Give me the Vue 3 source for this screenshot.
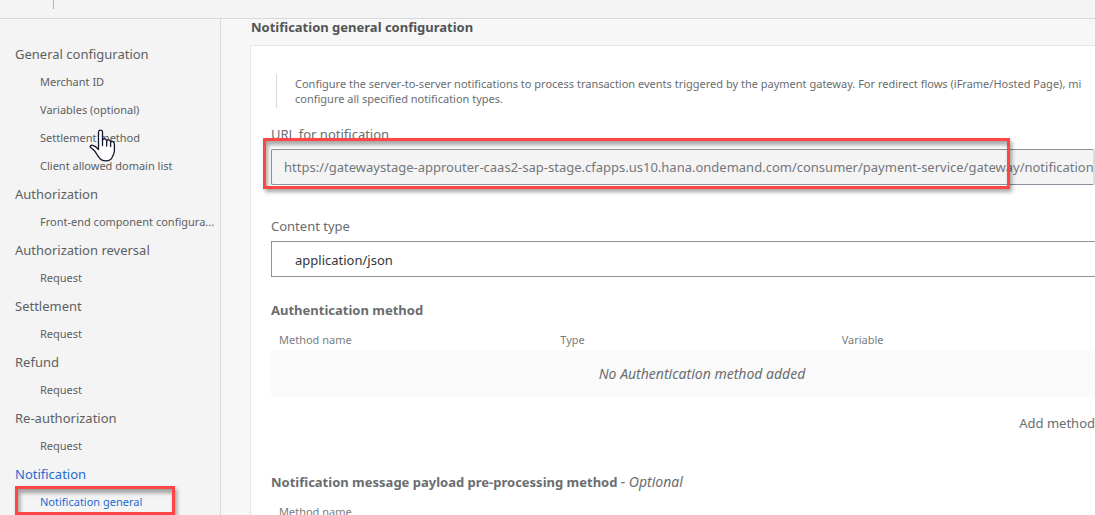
<script setup>
import { ref } from 'vue'

const groups = [
  { label: 'General configuration', items: ['Merchant ID', 'Variables (optional)', 'Settlement method', 'Client allowed domain list'] },
  { label: 'Authorization', items: ['Front-end component configura...'] },
  { label: 'Authorization reversal', items: ['Request'] },
  { label: 'Settlement', items: ['Request'] },
  { label: 'Refund', items: ['Request'] },
  { label: 'Re-authorization', items: ['Request'] },
  { label: 'Notification', items: ['Notification general'], active: true },
]
const url = ref('https://gatewaystage-approuter-caas2-sap-stage.cfapps.us10.hana.ondemand.com/consumer/payment-service/gateway/notifications')
const contentType = ref('application/json')
</script>

<template>
  <div class="page">
    <header class="topbar"><span class="divider"></span></header>
    <div class="body">
      <nav class="sidebar" aria-label="Configuration sections">
        <ul class="groups">
          <li v-for="group in groups" :key="group.label">
            <a href="#" class="group" :class="{ active: group.active }">{{ group.label }}</a>
            <ul class="items">
              <li v-for="item in group.items" :key="item" class="row">
                <a href="#" class="item" :class="{ active: group.active }">{{ item }}</a>
                <svg v-if="item === 'Settlement method'" class="cursor" width="28" height="34" viewBox="0 0 28 34" aria-hidden="true">
                  <path d="M9.5 21.5V4.2C9.5 1.4 13.5 1.4 13.5 4.2V12.2C14 10.2 17.4 10.2 17.7 12.8C18.4 11.2 21.3 11.5 21.6 14C22.8 12.6 25.4 13.6 25.4 16.3V22.5C25.4 26 24 27.2 23.2 29.2C22 32 20 32.8 16.8 32.8C13.2 32.8 11.2 31.4 9.4 28.6L5.8 23.2C4.4 21.3 2.6 20.4 1.5 19.3C.5 18.2 2 17 3.6 17.3C6 17.7 7.8 19.4 9.5 21.5Z" fill="#fff" stroke="#15152b" stroke-width="1.3" stroke-linejoin="round" />
                  <path d="M13.5 12V17.5M17.7 12.8V18M21.6 14V18.5" fill="none" stroke="#15152b" stroke-width="1.3" stroke-linecap="round" />
                </svg>
                <span v-if="item === 'Notification general'" class="mark mark-nav"></span>
              </li>
            </ul>
          </li>
        </ul>
      </nav>

      <main class="main">
        <h1 class="title">Notification general configuration</h1>
        <section class="card">
          <p class="hint">
            Configure the server-to-server notifications to process transaction events triggered by the payment gateway. For redirect flows (iFrame/Hosted Page), mi<br>configure all specified notification types.
          </p>

          <div class="field">
            <label for="url">URL for notification</label>
            <div class="url-row">
              <input id="url" v-model="url" class="url" type="text" readonly>
              <button class="copy" type="button" aria-label="Copy URL"></button>
            </div>
            <span class="mark mark-url"></span>
          </div>

          <div class="field content-type">
            <label for="type">Content type</label>
            <select id="type" v-model="contentType" class="select">
              <option>application/json</option>
            </select>
          </div>

          <h2 class="subtitle">Authentication method</h2>
          <table class="table">
            <thead>
              <tr><th>Method name</th><th>Type</th><th>Variable</th><th class="tail"></th></tr>
            </thead>
            <tbody>
              <tr><td colspan="4">No Authentication method added</td></tr>
            </tbody>
          </table>
          <div class="actions">
            <button class="add" type="button">Add method</button>
          </div>

          <h2 class="subtitle">Notification message payload pre-processing method <em>- Optional</em></h2>
          <table class="table">
            <thead>
              <tr><th>Method name</th></tr>
            </thead>
          </table>
        </section>
      </main>
    </div>
  </div>
</template>

<style>
body {
  margin: 0;
}
</style>

<style scoped>
.page {
  display: flex;
  flex-direction: column;
  height: 100vh;
  overflow: hidden;
  background: #f7f7f7;
  color: #6a6d70;
  font: 13px/20px "Noto Sans", sans-serif;
}
.page * {
  box-sizing: border-box;
}
.topbar {
  flex: none;
  height: 19px;
  padding-left: 53px;
  background: #f4f4f4;
  border-bottom: 1px solid #d9d9d9;
}
.divider {
  display: block;
  width: 1px;
  height: 9px;
  background: #b3b3b3;
}
.body {
  display: flex;
  flex: 1;
  min-height: 0;
}
.sidebar {
  flex: none;
  width: 221px;
  padding-top: 21px;
  background: #f4f4f4;
  border-right: 1px solid #d9d9d9;
}
.groups,
.items {
  margin: 0;
  padding: 0;
  list-style: none;
}
.group,
.item {
  display: block;
  height: 28px;
  line-height: 28px;
  color: #5c5f62;
  text-decoration: none;
  white-space: nowrap;
}
.group {
  padding-left: 15px;
}
.item {
  padding-left: 40px;
  font-size: 11px;
}
.group.active,
.item.active {
  color: #1f6bd0;
}
.row {
  position: relative;
}
.cursor {
  position: absolute;
  top: 4px;
  left: 89px;
}
.mark {
  position: absolute;
  border: 3px solid #ff4545;
  box-shadow: 2px 3px 4px rgba(0, 0, 0, .35), inset 2px 4px 4px rgba(0, 0, 0, .35);
  pointer-events: none;
}
.mark-nav {
  top: -2px;
  left: 15px;
  width: 160px;
  height: 29px;
}
.main {
  flex: 1;
  min-width: 0;
  padding-left: 29px;
  overflow: hidden;
}
.title,
.subtitle {
  margin: 0;
  font-size: 13px;
  line-height: 20px;
  font-weight: 700;
  white-space: nowrap;
}
.title {
  padding: 0 0 10px 1px;
  line-height: 16px;
  color: #515456;
}
.card {
  margin-right: -59px;
  height: 100%;
  padding: 28px 20px;
  background: #fff;
  border: 1px solid #e5e5e5;
}
.hint {
  margin: 0 0 16px 5px;
  padding: 2px 0 2px 18px;
  border-left: 1px solid #d9d9d9;
  font-size: 11px;
  line-height: 15px;
  white-space: nowrap;
}
.field {
  position: relative;
  display: flex;
  flex-direction: column;
}
.field label {
  margin-bottom: 5px;
}
.url-row {
  display: flex;
  margin-right: 35px;
}
.url,
.select {
  height: 36px;
  border: 1px solid #89919a;
  font: inherit;
  outline: none;
}
.url {
  flex: 1;
  min-width: 0;
  padding: 0 0 0 12px;
  border-right: 0;
  border-radius: 2px 0 0 2px;
  background: #f4f4f4;
  color: #74777a;
}
.copy {
  width: 5px;
  padding: 0;
  border: 0;
  background: #dcdcdc;
}
.mark-url {
  top: 14px;
  left: -8px;
  width: 747px;
  height: 51px;
}
.content-type {
  margin: 31px 0 23px;
}
.select {
  width: 100%;
  padding: 2px 23px 0;
  appearance: none;
  border-radius: 0;
  background: #fff;
  color: #32363a;
}
.table {
  width: 100%;
  border-collapse: collapse;
  table-layout: fixed;
}
.table th {
  height: 31px;
  padding: 8px 8px 0;
  color: #7a7d80;
  font-size: 11px;
  font-weight: 400;
  text-align: left;
}
.table .tail {
  width: 18px;
}
.table td {
  height: 46px;
  padding: 0;
  background: #fafafa;
  font-size: 14px;
  font-style: italic;
  text-align: center;
}
.actions {
  display: flex;
  justify-content: flex-end;
  padding: 16px 38px 39px 0;
}
.add {
  padding: 0;
  border: 0;
  background: none;
  color: inherit;
  font: inherit;
}
.subtitle em {
  font-size: 14px;
  font-weight: 400;
}
</style>
